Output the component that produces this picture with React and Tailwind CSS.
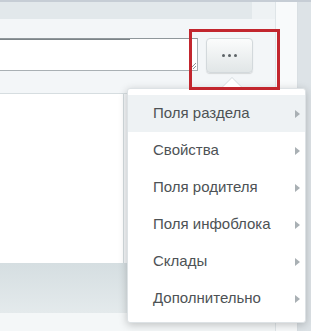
import React from 'react';

const items = ['Поля раздела', 'Свойства', 'Поля родителя', 'Поля инфоблока', 'Склады', 'Дополнительно'];

const App = () => {
    return (
        <div className="relative w-[311px] h-[331px] overflow-hidden bg-[#e3e9ec]" style={{ fontFamily: '"Liberation Sans", Arial, sans-serif' }}>
            <div className="h-[2px] bg-[#c6cdd5]" />
            <div className="flex h-[329px]">
                {/* main column */}
                <div className="w-[276px] flex flex-col border-r border-[#dfe5e8]">
                    <div className="flex h-[17px]">
                        <div className="w-[252px] bg-[#e2e8eb]" />
                        <div className="flex-1 bg-[#eef2f4]" />
                    </div>
                    <div className="h-[74px] bg-[#f3f6f8] flex items-start pt-[19px]">
                        <div className="relative w-[199px] h-[33px] -ml-px bg-white border border-[#a9b0b4] border-t-[#8f979b]">
                            <div className="absolute left-0 top-0 w-[130px] h-px bg-[#7c8488]" />
                            <svg className="absolute right-0 bottom-0" width="9" height="9" viewBox="0 0 9 9">
                                <path d="M8 2L2 8M8 5L5 8" stroke="#8d9498" strokeWidth="1" />
                            </svg>
                        </div>
                        <div className="ml-[8px] w-[47px] h-[35px] rounded-[4px] border border-[#d3d9dc] bg-gradient-to-b from-[#fbfcfc] to-[#e1e6e7] shadow-[0_1px_1px_rgba(0,0,0,0.12)] flex items-center justify-center gap-[3px]">
                            <span className="w-[3px] h-[3px] rounded-full bg-[#5d6367]" />
                            <span className="w-[3px] h-[3px] rounded-full bg-[#5d6367]" />
                            <span className="w-[3px] h-[3px] rounded-full bg-[#5d6367]" />
                        </div>
                    </div>
                    <div className="flex-1 flex flex-col">
                        <div className="flex h-[170px] border-t border-[#d6dde0]">
                            <div className="w-[124px] bg-white border-r border-[#d3dadd]" />
                            <div className="flex-1 bg-[#f3f6f8]" />
                        </div>
                        <div className="h-[50px] bg-gradient-to-b from-[#d5dee1] to-[#e4eaec]" />
                        <div className="flex-1 bg-[#f4f7f8]" />
                    </div>
                </div>
                <div className="w-[22px] bg-[#f8fafb] border-r border-[#d9dfe3]" />
                <div className="flex-1 bg-[#dde3e7]" />
            </div>

            {/* popup menu */}
            <div className="absolute left-[127px] top-[88px] w-[179px] h-[235px] bg-white rounded-[3px] border border-[#dde2e5] shadow-[0_2px_8px_rgba(0,0,0,0.22)] pt-[6px]">
                <div className="absolute left-[92px] -top-[12px] w-0 h-0 border-l-[12px] border-r-[12px] border-b-[12px] border-l-transparent border-r-transparent border-b-[#d4dadd]" />
                <div className="absolute left-[93px] -top-[11px] w-0 h-0 border-l-[11px] border-r-[11px] border-b-[11px] border-l-transparent border-r-transparent border-b-white" />
                {items.map((item, i) => (
                    <div
                        key={item}
                        className={`h-[37px] flex items-center justify-between pl-[25px] pr-[5px] text-[15px] text-[#4d5255] ${i === 0 ? 'bg-[#eef2f4]' : ''}`}
                    >
                        <span>{item}</span>
                        <svg width="5" height="8" viewBox="0 0 5 8">
                            <path d="M0 0L5 4L0 8Z" fill="#a9b0b4" />
                        </svg>
                    </div>
                ))}
            </div>

            {/* red highlight */}
            <div className="absolute left-[189px] top-[29px] w-[91px] h-[61px] border-[3px] border-[#c2262e]" />
        </div>
    );
};

export default App;
